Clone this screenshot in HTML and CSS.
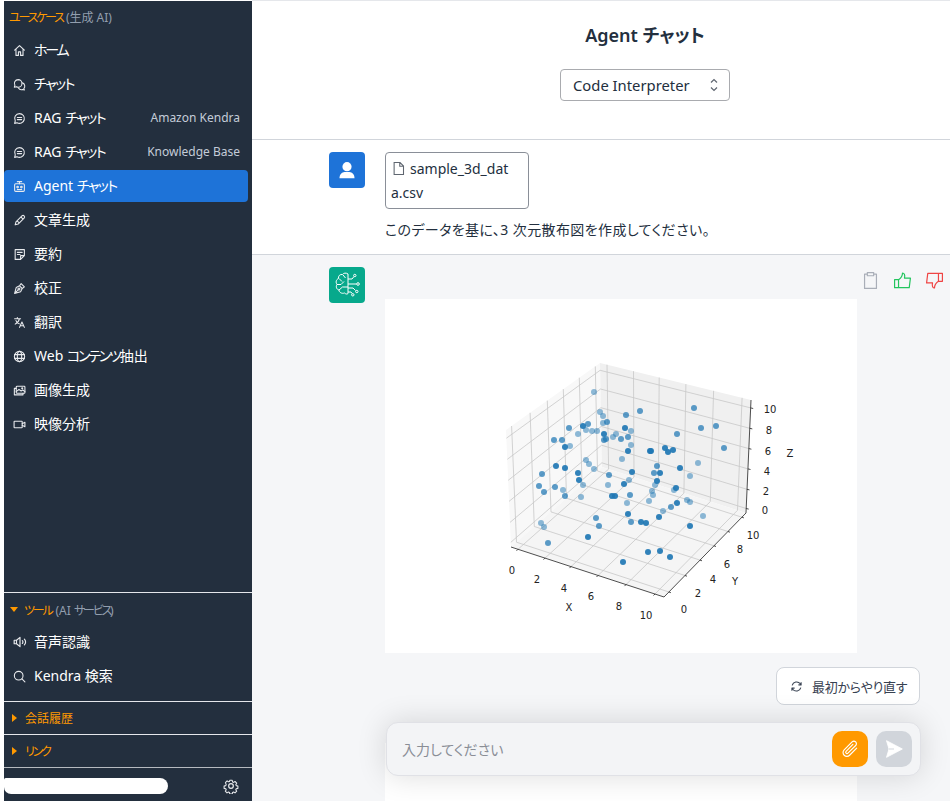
FILE: index.html
```html
<!DOCTYPE html>
<html lang="ja">
<head>
    <meta charset="UTF-8">
    <title>Agent チャット</title>
    <link rel="stylesheet" href="styles.css">
</head>
<body>
<div class="app">
    <aside class="sidebar">
        <div class="nav-head"><span class="orange kana-tight">ユースケース</span> <span class="muted">(生成 AI)</span></div>
        <nav class="nav-list">
            <a class="nav-item"><svg class="nav-icon" viewBox="0 0 24 24"><path d="M3 11.500 12 3l9 8.500M5.500 9.500V21h4.500v-6.500h4V21h4.500V9.500"/></svg><span class="kana-tight">ホーム</span></a>
            <a class="nav-item"><svg class="nav-icon" viewBox="0 0 24 24"><path d="M9.500 3a7 7 0 0 0-6 10.500L2.500 17l3.800-1A7 7 0 0 0 9.500 17a7 7 0 0 0 0-14z"/><path d="M17.500 9a6.500 6.500 0 0 1 2.500 10.500l1 2.500-3.500-.8A6.500 6.500 0 0 1 10 18.500"/></svg><span class="kana">チャット</span></a>
            <a class="nav-item"><svg class="nav-icon" viewBox="0 0 24 24"><path d="M12 3a9 9 0 1 1-4.500 16.800L3 21l1.200-4.500A9 9 0 0 1 12 3z"/><path d="M8 10h8M8 14h8"/></svg><span>RAG <span class="kana">チャット</span></span><span class="nav-note">Amazon Kendra</span></a>
            <a class="nav-item"><svg class="nav-icon" viewBox="0 0 24 24"><path d="M12 3a9 9 0 1 1-4.500 16.800L3 21l1.200-4.500A9 9 0 0 1 12 3z"/><path d="M8 10h8M8 14h8"/></svg><span>RAG <span class="kana">チャット</span></span><span class="nav-note">Knowledge Base</span></a>
            <a class="nav-item active"><svg class="nav-icon" viewBox="0 0 24 24"><rect x="3" y="7" width="18" height="14" rx="2"/><path d="M12 7V3M8 3h8"/><circle cx="8.500" cy="13" r="1.500"/><circle cx="15.500" cy="13" r="1.500"/><path d="M8 17.500h8"/></svg><span>Agent <span class="kana">チャット</span></span></a>
            <a class="nav-item"><svg class="nav-icon" viewBox="0 0 24 24"><path d="M4 20l1.500-5.500L16.500 3.500a2.800 2.800 0 0 1 4 4L9.500 18.500zM14.500 5.500l4 4M7.500 12.500l4 4"/></svg><span>文章生成</span></a>
            <a class="nav-item"><svg class="nav-icon" viewBox="0 0 24 24"><path d="M14 21H4V3h17v11zM21 14h-7v7M8 8h9M8 12h5"/></svg><span>要約</span></a>
            <a class="nav-item"><svg class="nav-icon" viewBox="0 0 24 24"><path d="M3 21l3-11 6-3 5 5-3 6zM3 21l6.500-6.500M12 7l3-4 6 6-4 3"/><circle cx="11" cy="13" r="1.800"/></svg><span>校正</span></a>
            <a class="nav-item"><svg class="nav-icon" viewBox="0 0 24 24"><path d="M3 5h11M8 3v2M12 5c-1 5-4 8-8 10M5.500 8.500c1 3 3.500 5 6 6M12 21l4.500-10 4.500 10M13.500 18h6"/></svg><span>翻訳</span></a>
            <a class="nav-item"><svg class="nav-icon" viewBox="0 0 24 24"><circle cx="12" cy="12" r="9.500"/><ellipse cx="12" cy="12" rx="4" ry="9.500"/><path d="M3 8.500h18M3 15.500h18"/></svg><span>Web <span class="kana-tight">コンテンツ</span>抽出</span></a>
            <a class="nav-item"><svg class="nav-icon" viewBox="0 0 24 24"><rect x="6" y="4" width="16" height="13" rx="1.500"/><path d="M6 8H2.500v12h16v-3M6 14l5-4 4 3 3-2 4 3"/><circle cx="17" cy="8" r="1"/></svg><span>画像生成</span></a>
            <a class="nav-item"><svg class="nav-icon" viewBox="0 0 24 24"><rect x="2" y="6" width="15" height="12" rx="1"/><path d="M17 10.500l5-2.500v8l-5-2.500"/></svg><span>映像分析</span></a>
        </nav>
        <div class="side-bottom">
            <section class="side-group tools">
                <div class="group-head head-open"><span class="caret down"></span><span class="orange kana-tight">ツール</span> <span class="muted">(AI <span class="kana-tight">サービス</span>)</span></div>
                <a class="nav-item"><svg class="nav-icon wide" viewBox="0 0 24 24"><path d="M2 9h4l6-5v16l-6-5H2zM6 9v6M16 9.500a3.500 3.500 0 0 1 0 5M19.500 7a7 7 0 0 1 0 10"/></svg><span>音声認識</span></a>
                <a class="nav-item"><svg class="nav-icon" viewBox="0 0 24 24"><circle cx="10.500" cy="10.500" r="8"/><path d="M16.500 16.500 22 22"/></svg><span>Kendra 検索</span></a>
            </section>
            <section class="side-group fold">
                <div class="group-head"><span class="caret"></span><span class="orange">会話履歴</span></div>
            </section>
            <section class="side-group fold">
                <div class="group-head"><span class="caret"></span><span class="orange kana-tight">リンク</span></div>
            </section>
            <div class="user-row">
                <div class="user-mask"></div>
                <svg class="gear" viewBox="0 0 24 24"><path d="M10 2.500h4l.6 2.800 1.700.7 2.400-1.500 2.800 2.800-1.500 2.400.7 1.700 2.800.6v4l-2.800.6-.7 1.700 1.500 2.400-2.800 2.800-2.400-1.500-1.700.7-.6 2.800h-4l-.6-2.800-1.700-.7-2.400 1.500-2.800-2.800 1.500-2.400-.7-1.700-2.800-.6v-4l2.800-.6.7-1.700L2.700 6.300l2.800-2.800 2.400 1.500 1.700-.7z" transform="translate(1.200 1.200) scale(.9)"/><circle cx="12" cy="12" r="3.500"/></svg>
            </div>
        </div>
    </aside>

    <main class="main">
        <header class="page-head">
            <h1 class="page-title">Agent チャット</h1>
            <div class="model-select">
                <span>Code Interpreter</span>
                <svg class="chevrons" viewBox="0 0 12 18"><path d="M3 6.500 6 3.500l3 3M3 11.500l3 3 3-3"/></svg>
            </div>
        </header>

        <section class="msg msg-user">
            <div class="avatar avatar-user">
                <svg viewBox="0 0 24 24"><circle cx="12" cy="8" r="5.500"/><path d="M3 22c0-5 3-7 6-7.500h6c3 .5 6 2.500 6 7.500z"/></svg>
            </div>
            <div class="msg-body">
                <div class="file-chip"><svg class="file-icon" viewBox="0 0 24 24"><path d="M5 2.500h9.500L20 8v13.500H5zM14 3v5.500h6"/></svg><span>sample_3d_data.csv</span></div>
                <p class="msg-text">このデータを基に、3 次元散布図を作成してください。</p>
            </div>
        </section>

        <section class="msg msg-bot">
            <div class="avatar avatar-bot">
                <svg viewBox="0 0 36 36">
                    <path d="M19 7c-2-1.500-4.500-1-5.500.5-2.500-.5-4.500 1.500-4 4-2.500 1-3 4-1.500 6-1.500 2-.5 5 2 5.500 0 2.500 3 4 5.500 3 1 1 2.500 1.500 3.500.5z"/>
                    <path d="M8 17.500h4l3-3M10 11.500l3 3M10 23l3.500-3H19M14 8l2.500 3M19 12h4l2-2.500M19 17h8.500M19 21h5l2.500 2.500M19 25h3l1 1.500"/>
                    <circle cx="25.800" cy="8.500" r="1.200"/><circle cx="29" cy="17" r="1.300"/><circle cx="27.800" cy="24.500" r="1.200"/><circle cx="23.800" cy="27.800" r="1.200"/>
                </svg>
            </div>
            <div class="msg-body">
                <div class="msg-actions">
                    <svg class="act act-copy" viewBox="0 0 24 24"><path d="M8 4H4.500v18h15V4H16M8 2h8v4H8z"/></svg>
                    <svg class="act act-good" viewBox="0 0 24 24"><path d="M2 11h5v10H2zM7 11c3-2 5-5 5-8.500 2 0 3.500 2 2.500 6.500H22l-1.500 12H7"/></svg>
                    <svg class="act act-bad" viewBox="0 0 24 24"><path d="M22 13h-5V3h5zM17 13c-3 2-5 5-5 8.500-2 0-3.500-2-2.500-6.500H2L3.500 3H17"/></svg>
                </div>
                <div class="chart-box">
                    <svg class="chart" viewBox="385 299 472 354">
                        <polygon class="pane-l" points="506,430 600,363 602,467 511,547"/>
                        <polygon class="pane-r" points="600,363 751,400 746,513 602,467"/>
                        <polygon class="pane-f" points="511,547 602,467 746,513 664,597"/>
                        <g class="grid">
                            <polyline points="518,549.300 608.600,469.100 607,364.700"/>
                            <polyline points="545,558.100 634,477.200 633.500,371.200"/>
                            <polyline points="571,566.600 658.400,485 659.200,377.500"/>
                            <polyline points="598,575.500 683.900,493.200 685.900,384.100"/>
                            <polyline points="626,584.600 710.300,501.600 713.600,390.800"/>
                            <polyline points="655,594 737.500,510.300 742.100,397.800"/>
                            <polyline points="668.900,592 516.500,542.200 511.600,426"/>
                            <polyline points="685,575.500 534.300,526.500 530.100,412.800"/>
                            <polyline points="700,560.100 551,511.900 547.300,400.600"/>
                            <polyline points="714,545.800 566.500,498.200 563.300,389.100"/>
                            <polyline points="728,531.500 582,484.600 579.300,377.700"/>
                            <polyline points="741.900,517.200 597.500,471 595.300,366.400"/>
                            <polyline points="746.200,508.500 601.900,462.800 510.800,542.300"/>
                            <polyline points="747,489.300 601.600,445.200 510,522.400"/>
                            <polyline points="748,468.900 601.200,426.400 509,501.400"/>
                            <polyline points="748.900,448.600 600.900,407.700 508.200,480.300"/>
                            <polyline points="749.800,428.300 600.500,389 507.300,459.300"/>
                            <polyline points="750.700,407.900 600.100,370.300 506.400,438.200"/>
                        </g>
                        <g class="axes">
                            <polyline points="511,547 664,597 746,513 751,400"/>
                            <path d="M518 549.300l-1.500 1.500M545 558.100l-1.500 1.500M571 566.600l-1.500 1.500M598 575.500l-1.500 1.500M626 584.600l-1.500 1.500M655 594l-1.500 1.500"/>
                            <path d="M668.900 592l2 .7M685 575.500l2 .7M700 560.100l2 .7M714 545.800l2 .7M728 531.500l2 .7M741.900 517.200l2 .7"/>
                            <path d="M746.200 508.500l2.500 .6M747 489.300l2.500 .6M748 468.900l2.500 .6M748.900 448.600l2.500 .6M749.800 428.300l2.500 .6M750.700 407.900l2.500 .6"/>
                        </g>
                        <g class="dots far">
                            <circle cx="594" cy="392" r="3"/><circle cx="600" cy="412" r="3"/><circle cx="603" cy="416" r="3"/><circle cx="603" cy="423" r="3"/><circle cx="586" cy="430" r="3"/><circle cx="592" cy="431" r="3"/><circle cx="597" cy="431" r="3"/><circle cx="631" cy="431" r="3"/><circle cx="578" cy="434" r="3"/><circle cx="613" cy="437" r="3"/><circle cx="616" cy="434" r="3"/><circle cx="631" cy="445" r="3"/><circle cx="570" cy="446" r="3"/><circle cx="622" cy="459" r="3"/><circle cx="586" cy="460" r="3"/><circle cx="589" cy="464" r="3"/><circle cx="594" cy="469" r="3"/><circle cx="629" cy="480" r="3"/><circle cx="583" cy="485" r="3"/><circle cx="608" cy="485" r="3"/><circle cx="581" cy="497" r="3"/><circle cx="627" cy="503" r="3"/><circle cx="649" cy="501" r="3"/><circle cx="541" cy="523" r="3"/><circle cx="544" cy="527" r="3"/><circle cx="698" cy="463" r="3"/><circle cx="690" cy="476" r="3"/><circle cx="652" cy="491" r="3"/><circle cx="655" cy="485" r="3"/><circle cx="674" cy="490" r="3"/><circle cx="653" cy="495" r="3"/><circle cx="687" cy="500" r="3"/><circle cx="690" cy="502" r="3"/><circle cx="703" cy="516" r="3"/><circle cx="663" cy="511" r="3"/><circle cx="563" cy="490" r="3"/>
                        </g>
                        <g class="dots mid">
                            <circle cx="626" cy="415" r="3"/><circle cx="640" cy="411" r="3"/><circle cx="694" cy="408" r="3"/><circle cx="716" cy="426" r="3"/><circle cx="701" cy="428" r="3"/><circle cx="677" cy="434" r="3"/><circle cx="724" cy="448" r="3"/><circle cx="607" cy="422" r="3"/><circle cx="588" cy="424" r="3"/><circle cx="569" cy="428" r="3"/><circle cx="554" cy="440" r="3"/><circle cx="562" cy="440" r="3"/><circle cx="604" cy="440" r="3"/><circle cx="606" cy="439" r="3"/><circle cx="621" cy="439" r="3"/><circle cx="628" cy="437" r="3"/><circle cx="542" cy="474" r="3"/><circle cx="609" cy="475" r="3"/><circle cx="539" cy="486" r="3"/><circle cx="555" cy="487" r="3"/><circle cx="544" cy="492" r="3"/><circle cx="565" cy="496" r="3"/><circle cx="630" cy="495" r="3"/><circle cx="657" cy="466" r="3"/><circle cx="654" cy="473" r="3"/><circle cx="671" cy="507" r="3"/><circle cx="631" cy="522" r="3"/><circle cx="548" cy="543" r="3"/><circle cx="599" cy="526" r="3"/><circle cx="596" cy="518" r="3"/>
                        </g>
                        <g class="dots near">
                            <circle cx="583" cy="426" r="3"/><circle cx="625" cy="428" r="3"/><circle cx="604" cy="434" r="3"/><circle cx="565" cy="447" r="3"/><circle cx="628" cy="451" r="3"/><circle cx="650" cy="451" r="3"/><circle cx="556" cy="466" r="3"/><circle cx="565" cy="468" r="3"/><circle cx="578" cy="473" r="3"/><circle cx="632" cy="472" r="3"/><circle cx="579" cy="480" r="3"/><circle cx="624" cy="484" r="3"/><circle cx="612" cy="496" r="3"/><circle cx="615" cy="496" r="3"/><circle cx="665" cy="448" r="3"/><circle cx="668" cy="452" r="3"/><circle cx="673" cy="450" r="3"/><circle cx="651" cy="451" r="3"/><circle cx="680" cy="468" r="3"/><circle cx="660" cy="473" r="3"/><circle cx="657" cy="481" r="3"/><circle cx="676" cy="488" r="3"/><circle cx="677" cy="503" r="3"/><circle cx="659" cy="517" r="3"/><circle cx="628" cy="514" r="3"/><circle cx="641" cy="522" r="3"/><circle cx="646" cy="523" r="3"/><circle cx="690" cy="526" r="3"/><circle cx="588" cy="537" r="3"/><circle cx="648" cy="552" r="3"/><circle cx="660" cy="551" r="3"/><circle cx="670" cy="557" r="3"/><circle cx="623" cy="562" r="3"/>
                        </g>
                        <g class="ticks">
                            <text x="512" y="570">0</text><text x="537" y="579">2</text><text x="564" y="588">4</text><text x="591" y="596">6</text><text x="619" y="606">8</text><text x="646" y="615">10</text>
                            <text x="684" y="609">0</text><text x="698" y="593">2</text><text x="713" y="579">4</text><text x="727" y="564">6</text><text x="740" y="549">8</text><text x="753" y="535">10</text>
                            <text x="765" y="510">0</text><text x="766" y="491">2</text><text x="767" y="471">4</text><text x="768" y="451">6</text><text x="769" y="430">8</text><text x="770" y="409">10</text>
                            <text x="569" y="607">X</text><text x="735" y="581">Y</text><text x="790" y="453">Z</text>
                        </g>
                    </svg>
                </div>
                <div class="next-block"></div>
            </div>
        </section>

        <button class="reset-btn" type="button">
            <svg viewBox="0 0 24 24"><path d="M4 10a8.500 8.500 0 0 1 15-3l1.500 2M20.500 4v5h-5M20 14a8.500 8.500 0 0 1-15 3l-1.500-2M3.500 20v-5h5"/></svg>
            <span>最初からやり直す</span>
        </button>

        <div class="composer">
            <span class="composer-hint">入力してください</span>
            <button class="round-btn attach" type="button">
                <svg viewBox="0 0 24 24"><path d="M20 11l-8.500 8.500a4.500 4.500 0 0 1-6.500-6.500l9.500-9.500a3 3 0 0 1 4.300 4.300L9.500 17a1.500 1.500 0 0 1-2.200-2.200L15.500 6.500"/></svg>
            </button>
            <button class="round-btn send" type="button">
                <svg viewBox="0 0 24 24"><path d="M3 2l19 10L3 22l3-10z"/><path class="send-notch" d="M6 12h6"/></svg>
            </button>
        </div>
    </main>
</div>
</body>
</html>
```

FILE: styles.css
```css
* {
    box-sizing: border-box;
}
html, body {
    margin: 0;
    height: 100%;
    overflow: hidden;
}
body {
    font-family: "Noto Sans", "Noto Sans CJK JP", sans-serif;
    font-size: 14px;
    font-feature-settings: "palt";
    color: #232f3e;
    background-color: #fff;
}
.app {
    display: flex;
    height: 801px;
}
.kana {
    letter-spacing: -1.500px;
}
.kana-tight {
    letter-spacing: -2.200px;
}

/* sidebar */
.sidebar {
    display: flex;
    flex-direction: column;
    flex: none;
    width: 248px;
    margin: 1px 0 0 4px;
    background-color: #232f3e;
    color: #fff;
}
.nav-head {
    height: 33px;
    padding: 8px 5px 0;
    font-size: 12px;
    line-height: 18px;
}
.orange {
    color: #ff9900;
}
.muted {
    color: #929eae;
}
.nav-list {
    display: flex;
    flex-direction: column;
    gap: 2px;
}
.nav-item {
    display: flex;
    align-items: center;
    height: 32px;
    margin-right: 4px;
    padding: 0 8px 0 9px;
    line-height: 32px;
    border-radius: 4px;
    white-space: nowrap;
}
.nav-item.active {
    background-color: #1e73d8;
}
.nav-icon {
    flex: none;
    width: 13px;
    height: 13px;
    margin-right: 8px;
    fill: none;
    stroke: #e8eaed;
    stroke-width: 2;
    stroke-linejoin: round;
    stroke-linecap: round;
}
.nav-icon.wide {
    width: 14px;
    height: 14px;
    margin-right: 7px;
}
.nav-note {
    margin-left: auto;
    font-size: 12px;
    color: #c3ccd8;
}
.side-bottom {
    margin-top: auto;
}
.side-group {
    border-top: 1px solid #e5e7eb;
}
.side-group.tools {
    height: 109px;
}
.side-group.fold {
    height: 33px;
}
.group-head {
    display: flex;
    align-items: center;
    gap: 4px;
    height: 32px;
    padding-left: 8px;
    font-size: 12px;
}
.group-head.head-open {
    height: 33px;
    padding-left: 6px;
}
.tools .nav-item + .nav-item {
    margin-top: 2px;
}
.caret {
    flex: none;
    width: 0;
    height: 0;
    margin-right: 4px;
    border-style: solid;
    border-width: 4px 0 4px 5px;
    border-color: transparent transparent transparent #ff9900;
}
.caret.down {
    border-width: 5px 4px 0 4px;
    border-color: #ff9900 transparent transparent transparent;
    margin-right: 2px;
}
.user-row {
    display: flex;
    align-items: center;
    justify-content: space-between;
    height: 34px;
    padding: 2px 13px 0 0;
    border-top: 1px solid #b6bac0;
}
.user-mask {
    width: 164px;
    height: 16px;
    background-color: #fff;
    border-radius: 2px 9px 9px 8px;
}
.gear {
    width: 16px;
    height: 16px;
    fill: none;
    stroke: #e8eaed;
    stroke-width: 1.800;
    stroke-linejoin: round;
}

/* main column */
.main {
    position: relative;
    flex: 1;
    min-width: 0;
    height: 801px;
    overflow: hidden;
    border-top: 1px solid #e5e7eb;
}
.page-head {
    display: flex;
    flex-direction: column;
    align-items: center;
    height: 139px;
    padding: 21px 0 0 88px;
    border-bottom: 1px solid #d1d5db;
}
.page-title {
    margin: 0;
    font-size: 18px;
    font-weight: 600;
    line-height: 26px;
}
.model-select {
    display: flex;
    align-items: center;
    justify-content: space-between;
    width: 170px;
    height: 32px;
    margin-top: 21px;
    padding: 0 9px 0 12px;
    border: 1px solid #a9abaf;
    border-radius: 4px;
    font-size: 14.800px;
}
.chevrons {
    width: 12px;
    height: 18px;
    fill: none;
    stroke: #5f6670;
    stroke-width: 1.200;
}

/* messages */
.msg {
    display: flex;
    gap: 20px;
    padding: 12px 0 0 77px;
}
.msg-user {
    height: 115px;
    background-color: #fff;
    border-bottom: 1px solid #d1d5db;
}
.msg-bot {
    height: 546px;
    background-color: #f5f6f8;
}
.avatar {
    display: flex;
    align-items: center;
    justify-content: center;
    flex: none;
    width: 36px;
    height: 36px;
    border-radius: 4px;
}
.avatar-user {
    background-color: #1e73d8;
}
.avatar-user svg {
    width: 20px;
    height: 20px;
    fill: #fff;
}
.avatar-bot {
    background-color: #07a98c;
}
.avatar-bot svg {
    width: 36px;
    height: 36px;
    fill: none;
    stroke: #fff;
    stroke-width: 1;
}
.msg-body {
    flex: 1;
    min-width: 0;
}
.file-chip {
    width: 144px;
    height: 57px;
    padding: 4px 12px 4px 5px;
    border: 1px solid #8a8f98;
    border-radius: 4px;
    line-height: 24px;
    word-break: break-all;
}
.file-icon {
    width: 15px;
    height: 15px;
    margin-right: 4px;
    vertical-align: -2px;
    fill: none;
    stroke: #5f6670;
    stroke-width: 1.700;
}
.msg-text {
    margin: 9px 0 0;
    line-height: 24px;
    letter-spacing: .4px;
}
.msg-actions {
    display: flex;
    justify-content: flex-end;
    gap: 13px;
    height: 32px;
    padding: 4px 6px 0 0;
}
.act {
    width: 19px;
    height: 19px;
    fill: none;
    stroke-width: 1.500;
    stroke-linejoin: round;
}
.act-copy {
    stroke: #a9aeb8;
}
.act-good {
    stroke: #22c55e;
}
.act-bad {
    stroke: #ef4444;
}
.chart-box {
    width: 472px;
    height: 354px;
    background-color: #fff;
}
.chart {
    display: block;
    width: 472px;
    height: 354px;
}
.next-block {
    width: 472px;
    height: 60px;
    margin-top: 90px;
    background-color: #fff;
}

/* chart parts */
.pane-l {
    fill: #f8f8f8;
}
.pane-r {
    fill: #f0f0f0;
}
.pane-f {
    fill: #f5f5f5;
}
.grid polyline {
    fill: none;
    stroke: #c8c8c8;
    stroke-width: .8;
}
.axes polyline, .axes path {
    fill: none;
    stroke: #222;
    stroke-width: .8;
}
.dots circle {
    fill: #1f77b4;
}
.dots.far circle {
    opacity: .5;
}
.dots.mid circle {
    opacity: .72;
}
.dots.near circle {
    opacity: .92;
}
.ticks text {
    font-family: "DejaVu Sans", sans-serif;
    font-size: 10px;
    fill: #222;
    text-anchor: middle;
    dominant-baseline: central;
}

/* floating controls */
.reset-btn {
    position: absolute;
    left: 524px;
    top: 666px;
    display: flex;
    align-items: center;
    gap: 9px;
    width: 144px;
    height: 38px;
    padding: 0 0 0 13px;
    background-color: #fff;
    border: 1px solid #d1d5db;
    border-radius: 8px;
    font-family: inherit;
    font-feature-settings: inherit;
    font-size: 13px;
    letter-spacing: -.3px;
    white-space: nowrap;
    color: #374151;
}
.reset-btn svg {
    flex: none;
    width: 13px;
    height: 13px;
    fill: none;
    stroke: #374151;
    stroke-width: 2;
    stroke-linejoin: round;
}
.composer {
    position: absolute;
    left: 134px;
    top: 721px;
    display: flex;
    align-items: center;
    gap: 8px;
    width: 535px;
    height: 54px;
    padding: 0 8px 0 15px;
    background-color: #f3f4f6;
    border: 1px solid #e0e1e6;
    border-radius: 12px;
    box-shadow: 0 0 30px rgba(0, 0, 0, .14);
}
.composer-hint {
    flex: 1;
    color: #8a8e96;
}
.round-btn {
    display: flex;
    align-items: center;
    justify-content: center;
    width: 36px;
    height: 36px;
    padding: 0;
    border: none;
    border-radius: 10px;
}
.round-btn.attach {
    background-color: #ff9900;
}
.round-btn.attach svg {
    width: 20px;
    height: 20px;
    fill: none;
    stroke: #fff;
    stroke-width: 1.400;
    stroke-linecap: round;
}
.round-btn.send {
    background-color: #d1d5db;
}
.round-btn.send svg {
    width: 20px;
    height: 20px;
    fill: #fff;
    stroke: #fff;
    stroke-width: 1;
    stroke-linejoin: round;
}
.send-notch {
    fill: none;
    stroke: #d1d5db;
    stroke-width: 1.200;
}
```
